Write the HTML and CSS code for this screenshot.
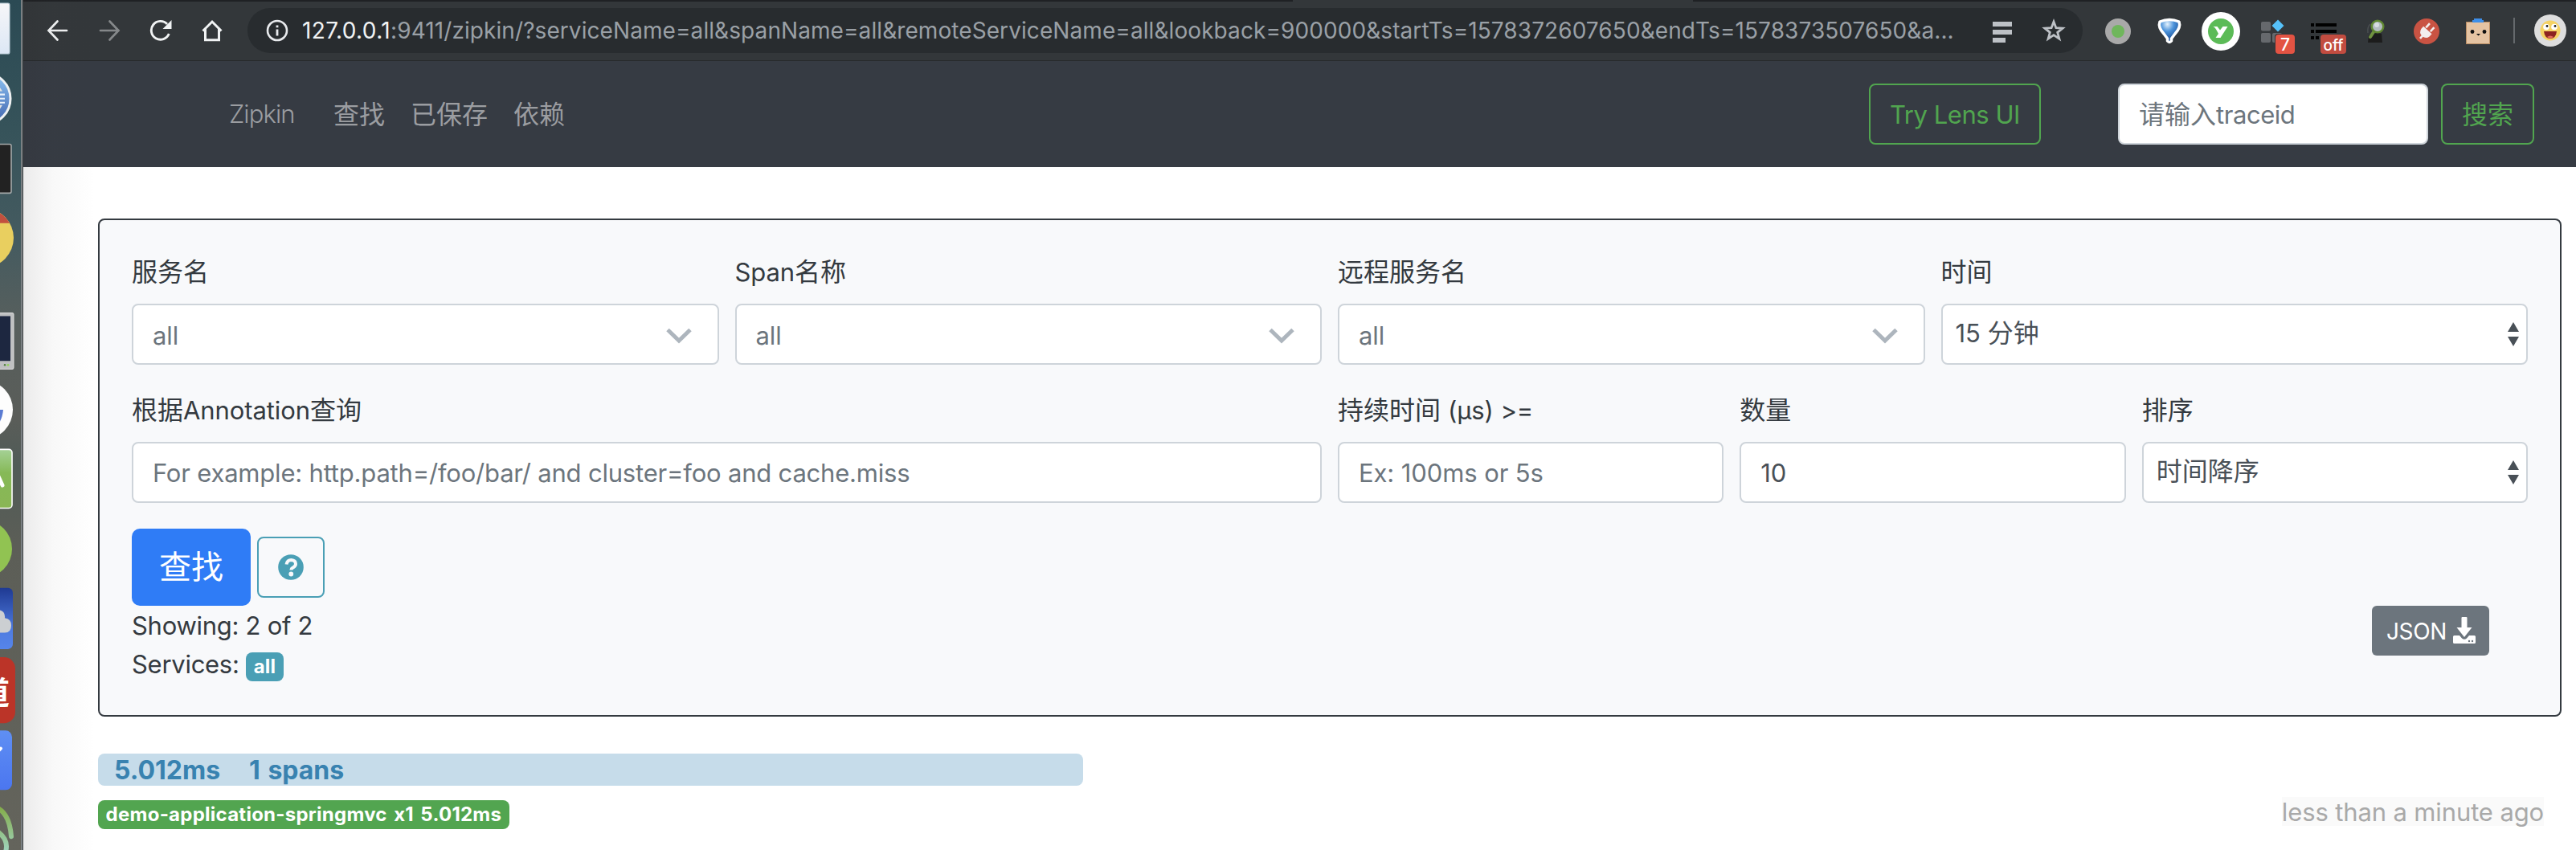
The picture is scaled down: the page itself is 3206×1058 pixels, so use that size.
FILE: index.html
```html
<!DOCTYPE html>
<html lang="zh-CN">
<head>
<meta charset="utf-8">
<title>Zipkin</title>
<link rel="stylesheet" href="styles.css">
</head>
<body>
<div class="desktop">
  <aside class="dock">
    <svg width="29" height="1058" viewBox="0 0 29 1058">
      <defs>
        <linearGradient id="sheet" x1="0" y1="0" x2="0" y2="1"><stop offset="0" stop-color="#f6f6f8"/><stop offset="1" stop-color="#dce7f5"/></linearGradient>
        <linearGradient id="sky" x1="0" y1="0" x2="0" y2="1"><stop offset="0" stop-color="#8fc5f4"/><stop offset="1" stop-color="#3f63ad"/></linearGradient>
        <linearGradient id="leaf" x1="0" y1="0" x2="0" y2="1"><stop offset="0" stop-color="#a5d196"/><stop offset=".4" stop-color="#86b957"/><stop offset="1" stop-color="#8ab655"/></linearGradient>
        <linearGradient id="cloud" x1="0" y1="0" x2="0" y2="1"><stop offset="0" stop-color="#1f3a93"/><stop offset=".7" stop-color="#4f7ce0"/><stop offset="1" stop-color="#5685ea"/></linearGradient>
        <linearGradient id="note" x1="0" y1="0" x2="0" y2="1"><stop offset="0" stop-color="#5f8ff3"/><stop offset="1" stop-color="#4b76f0"/></linearGradient>
        <linearGradient id="ring" x1="0" y1="0" x2="0" y2="1"><stop offset="0" stop-color="#84ad4c"/><stop offset="1" stop-color="#a5dcd6"/></linearGradient>
      </defs>
      <g transform="scale(1 1.0141)">
        <rect x="-20" y="4" width="32" height="62" rx="2" fill="url(#sheet)" stroke="#b9cbd6"/>
        <circle cx="-18" cy="121" r="31" fill="url(#sky)" stroke="#eef1f2" stroke-width="3"/>
        <path d="M-2 116H6M-2 121H6M-2 126H6" stroke="#eaf2fa" stroke-width="2"/>
        <path d="M-1 106L3 112H-2ZM-2 129H3L-1 135Z" fill="#e4e4e0"/>
        <rect x="-20" y="177" width="34" height="60" rx="2" fill="#222" stroke="#a5a9a9" stroke-width="1.6"/>
        <circle cx="-19" cy="292" r="36" fill="#e9cf5f"/>
        <path d="M-19 256A36 36 0 0 1 12 274H-19Z" fill="#c2503f"/>
        <rect x="-20" y="384" width="37" height="69" rx="2" fill="#bfc0c1" stroke="#dcdcdc"/>
        <rect x="-20" y="388" width="33" height="55" fill="#1d2740"/>
        <circle cx="6" cy="448" r="1.200" fill="#4b7c37"/><circle cx="10" cy="448" r="1.400" fill="#94d45c"/>
        <circle cx="-20" cy="503" r="36" fill="#fdfdfd"/>
        <path d="M-2 503H4Q3 514 -2 520Z" fill="#5a7bd2"/>
      </g>
      <g transform="translate(0 -7.45) scale(1 1.0141)">
        <rect x="-20" y="559" width="35" height="72" rx="4" fill="url(#leaf)" stroke="#fff" stroke-width="1.6"/>
        <path d="M-4 588L3 603" stroke="#fff" stroke-width="5" stroke-linecap="round"/>
        <circle cx="-20" cy="681" r="35" fill="#91c352"/>
        <rect x="-20" y="729" width="36" height="75" rx="6" fill="url(#cloud)"/>
        <path d="M-2 756Q7 757 6 766Q14 767 14 775Q14 784 6 784H-2Z" fill="#cccfd2"/>
        <rect x="-60" y="814" width="79" height="81" rx="14" fill="#bb3428"/>
        <text x="-26" y="871" class="dock-glyph">道</text>
        <rect x="-20" y="904" width="35" height="73" rx="8" fill="url(#note)"/>
        <path d="M-2 929L1 926" stroke="#fff" stroke-width="4" stroke-linecap="round"/>
        <path d="M-3 999Q12 1007 14 1034M-3 1028Q8 1036 8 1046T0 1064" fill="none" stroke="url(#ring)" stroke-width="6" stroke-linecap="round"/>
      </g>
    </svg>
  </aside>

  <div class="window">
    <div class="tab-edge"><span class="tab-rest tab-rest-left"></span><span class="tab-rest tab-rest-right"></span></div>
    <div class="toolbar">
      <svg class="nav-icon" width="28" height="28" viewBox="0 0 28 28"><path d="M25 14H3M13.500 2.500L2.500 14L13.500 25.500" fill="none" stroke="#f1f3f4" stroke-width="2.700" stroke-linecap="round"/></svg>
      <svg class="nav-icon" width="28" height="28" viewBox="0 0 28 28"><path d="M3 14H25M14.500 2.500L25.500 14L14.500 25.500" fill="none" stroke="#85888a" stroke-width="2.700" stroke-linecap="round"/></svg>
      <svg class="nav-icon" width="28" height="28" viewBox="0 0 28 28"><path d="M24.300 18A11.400 11.400 0 1 1 22 6" fill="none" stroke="#f1f3f4" stroke-width="2.900"/><path d="M27.500 1V12H16.500Z" fill="#f1f3f4"/></svg>
      <svg class="nav-icon" width="28" height="28" viewBox="0 0 28 28"><path d="M2.500 14.500L14 3L25.500 14.500M5.500 12V25.700H22.500V12" fill="none" stroke="#f1f3f4" stroke-width="3"/></svg>
      <div class="address">
        <svg width="28" height="28" viewBox="0 0 28 28"><circle cx="14" cy="14" r="12" fill="none" stroke="#e8eaed" stroke-width="2.600"/><path d="M14 12.500V20.500M14 7.500V10.200" stroke="#e8eaed" stroke-width="2.800"/></svg>
        <div class="url"><span class="host">127.0.0.1</span>:9411/zipkin/?serviceName=all&amp;spanName=all&amp;remoteServiceName=all&amp;lookback=900000&amp;startTs=1578372607650&amp;endTs=1578373507650&amp;a...</div>
        <svg class="reader" width="24" height="28" viewBox="0 0 24 28"><path d="M0 2H24V8H0ZM0 12H24V18H0ZM0 22H16V28H0Z" fill="#bdc1c6"/></svg>
        <svg class="star" width="30" height="30" viewBox="0 0 30 30"><path d="M15 4L17.900 11.700L26.100 12.100L19.700 17.300L21.900 25.200L15 20.700L8.100 25.200L10.300 17.300L3.900 12.100L12.100 11.700Z" fill="none" stroke="#bdc1c6" stroke-width="2.800"/></svg>
      </div>
      <div class="extensions">
        <svg width="64" height="76" viewBox="0 0 64 76"><circle cx="32" cy="38" r="16" fill="#a9a9a9"/><circle cx="32" cy="38" r="8" fill="#6fb65c"/></svg>
        <svg width="64" height="76" viewBox="0 0 64 76"><defs><radialGradient id="bal" cx=".4" cy=".2" r=".8"><stop offset="0" stop-color="#e4f2fd"/><stop offset=".4" stop-color="#4c93da"/><stop offset="1" stop-color="#0c3c86"/></radialGradient></defs><path d="M20 26Q32 21 44 26Q46.500 33 39 41L34.500 47V50Q32 53 29.500 50V47L25 41Q17.500 33 20 26Z" fill="url(#bal)" stroke="#fff" stroke-width="3.500" stroke-linejoin="round"/></svg>
        <svg width="64" height="76" viewBox="0 0 64 76"><circle cx="32" cy="38" r="24" fill="#fff"/><circle cx="32" cy="38" r="16" fill="#5cbb57"/><path d="M22.500 32H27.500L31 36.500L34.500 32H40.500L31.500 46H25.500L29 41Q28 39 26 35.500Q25 33 22.500 32Z" fill="#fff"/></svg>
        <svg width="64" height="76" viewBox="0 0 64 76"><rect x="18" y="26" width="12" height="11.500" rx="2" fill="#66696d"/><rect x="18" y="40" width="12" height="12" rx="2" fill="#66696d"/><rect x="32" y="40" width="12" height="12" rx="2" fill="#66696d"/><path d="M39 23.500L46.500 31L39 38.500L31.500 31Z" fill="#56c1f9"/><rect x="35" y="41" width="26" height="26" rx="4" fill="#33373a"/><rect x="36" y="42" width="24" height="24" rx="4" fill="#e35343"/><text x="48" y="61.500" class="badge-text">7</text></svg>
        <svg width="64" height="76" viewBox="0 0 64 76"><path d="M16 28H20V32H16ZM22 28H48V32H22ZM16 36H20V40H16ZM22 36H48V40H22ZM16 44H20V48H16ZM22 44H26V48H22Z" fill="#000"/><rect x="28" y="42" width="32" height="24" rx="4" fill="#c24c40"/><text x="44" y="61.500" class="badge-text badge-wide">off</text></svg>
        <svg width="64" height="76" viewBox="0 0 64 76"><path d="M24 43Q32 38 40 41L41 52H23Z" fill="#1c1c1c"/><path d="M26 29Q22 32 23 40" fill="none" stroke="#4a4e51" stroke-width="1.500"/><path d="M30 39L26 45" stroke="#6f9140" stroke-width="4" stroke-linecap="round"/><circle cx="35" cy="32" r="7.300" fill="#b4bcc0" stroke="#5f8730" stroke-width="2.500"/><circle cx="34" cy="30" r="3" fill="#d8dee0"/></svg>
        <svg width="64" height="76" viewBox="0 0 64 76"><circle cx="32" cy="38" r="16" fill="#c95343"/><g transform="translate(32 38) rotate(42)" fill="#f3eeee"><path d="M-7 -2H7V2Q6 8 0 8Q-6 8 -7 2Z"/><rect x="-5" y="-10" width="2.600" height="7"/><rect x="2.400" y="-10" width="2.600" height="7"/><rect x="-1.300" y="7" width="2.600" height="5"/></g></svg>
        <svg width="64" height="76" viewBox="0 0 64 76"><rect x="17.500" y="26.500" width="29" height="27" fill="#e5c3a2" stroke="#b98c62"/><path d="M27 22H37V24H39V27H25V24H27Z" fill="#3f8fe8"/><circle cx="25" cy="38.500" r="2.400" fill="#111"/><circle cx="40" cy="38.500" r="2.400" fill="#111"/><path d="M30 41H35L32.500 43.500Z" fill="#111"/></svg>
      </div>
      <span class="divider"></span>
      <svg class="avatar" width="40" height="40" viewBox="0 0 40 40"><circle cx="20" cy="20" r="20" fill="#dedede"/><circle cx="20" cy="20" r="12.500" fill="#f5d264"/><circle cx="15" cy="15.500" r="3.800" fill="#fff"/><circle cx="25" cy="15.500" r="3.800" fill="#fff"/><circle cx="16" cy="14.500" r="1.400" fill="#222"/><circle cx="26" cy="14.500" r="1.400" fill="#222"/><path d="M12 21H28Q27 30 20 30Q13 30 12 21Z" fill="#8c2320"/><path d="M16 28Q20 25 24 28Q20 31 16 28Z" fill="#e26a5c"/></svg>
    </div>

    <nav class="navbar">
      <a class="brand">Zipkin</a>
      <a class="nav-link">查找</a>
      <a class="nav-link">已保存</a>
      <a class="nav-link">依赖</a>
      <button class="btn btn-lens">Try Lens UI</button>
      <div class="control trace-input"><span>请输入<span class="latin">traceid</span></span></div>
      <button class="btn btn-search">搜索</button>
    </nav>

    <main class="content">
      <section class="panel">
        <div class="form-row row-services">
          <div class="field"><label>服务名</label><div class="control chosen"><span class="latin">all</span><svg width="32" height="20" viewBox="0 0 32 20"><path d="M2 2.500L16 16L30 2.500" fill="none" stroke="#adb5bd" stroke-width="5"/></svg></div></div>
          <div class="field"><label><span class="latin">Span</span>名称</label><div class="control chosen"><span class="latin">all</span><svg width="32" height="20" viewBox="0 0 32 20"><path d="M2 2.500L16 16L30 2.500" fill="none" stroke="#adb5bd" stroke-width="5"/></svg></div></div>
          <div class="field"><label>远程服务名</label><div class="control chosen"><span class="latin">all</span><svg width="32" height="20" viewBox="0 0 32 20"><path d="M2 2.500L16 16L30 2.500" fill="none" stroke="#adb5bd" stroke-width="5"/></svg></div></div>
          <div class="field"><label>时间</label><div class="control select"><span><span class="latin">15</span> 分钟</span><svg width="14" height="30" viewBox="0 0 14 30"><path d="M7 0L14 12H0ZM0 18H14L7 30Z" fill="#495057"/></svg></div></div>
        </div>
        <div class="form-row row-filters">
          <div class="field"><label>根据<span class="latin">Annotation</span>查询</label><div class="control"><span class="latin example">For example: http.path=/foo/bar/ and cluster=foo and cache.miss</span></div></div>
          <div class="field"><label>持续时间 <span class="latin">(μs) &gt;=</span></label><div class="control"><span class="latin">Ex: 100ms or 5s</span></div></div>
          <div class="field"><label>数量</label><div class="control filled"><span class="latin">10</span></div></div>
          <div class="field"><label>排序</label><div class="control select"><span>时间降序</span><svg width="14" height="30" viewBox="0 0 14 30"><path d="M7 0L14 12H0ZM0 18H14L7 30Z" fill="#495057"/></svg></div></div>
        </div>
        <div class="actions">
          <button class="btn-find">查找</button>
          <button class="btn-help"><svg width="32" height="36" viewBox="0 0 32 36"><ellipse cx="16" cy="18" rx="15.800" ry="15.800" fill="#4a9fb5"/><path d="M10.500 14.500Q11.500 9 16.500 9Q22 9.500 22 14Q22 16.500 19 18.300Q16.500 19.500 16.500 21.500" fill="none" stroke="#f8f9fb" stroke-width="4"/><circle cx="16.300" cy="26.500" r="2.900" fill="#f8f9fb"/></svg></button>
        </div>
        <div class="summary">
          <div class="latin counts">
            <div>Showing: 2 of 2</div>
            <div>Services: <span class="tag tag-info">all</span></div>
          </div>
          <button class="btn-json"><span>JSON</span><svg width="28" height="34" viewBox="0 0 28 34"><path d="M10.500 1Q10.500 0 11.500 0H16.500Q17.500 0 17.500 1V13H23.500L14 25L4.500 13H10.500Z" fill="#fff"/><path d="M1.500 23H8L11 26.500Q14 29 17 26.500L20 23H26.500Q28 23 28 24.500V31.500Q28 33 26.500 33H1.500Q0 33 0 31.500V24.500Q0 23 1.500 23Z" fill="#fff"/><circle cx="20" cy="30" r="1.200" fill="#6c757d"/><circle cx="24" cy="30" r="1.200" fill="#6c757d"/></svg></button>
        </div>
      </section>

      <section class="trace">
        <div class="trace-bar"><span class="duration">5.012ms</span><span>1 spans</span></div>
        <div class="trace-info">
          <span class="tag tag-service">demo-application-springmvc x1 5.012ms</span>
          <span class="time-ago">less than a minute ago</span>
        </div>
      </section>
    </main>
  </div>
</div>
</body>
</html>
```
FILE: styles.css
```css
* { box-sizing: border-box; }
body {
  margin: 0;
  overflow: hidden;
  font: 32px/48px Inter, "Noto Sans CJK SC", sans-serif;
  color: #343a40;
}
svg { display: block; flex: none; }
button { font: inherit; letter-spacing: inherit; padding: 0; }

.desktop { display: flex; width: 3206px; height: 1058px; overflow: hidden; }

.dock {
  width: 29px;
  flex: none;
  background:
    linear-gradient(90deg, transparent 26px, #7b8083 26px, #7b8083 28px, #3a3e40 28px),
    linear-gradient(180deg, #2b4a54 0, #36535a 160px, #455b60 300px, #575f5d 400px, #5a5d59 520px, #505b57 580px, #5c5e57 680px, #64645c 1058px);
}
.dock-glyph { font: 700 38px "Noto Sans CJK SC", sans-serif; fill: #fff; }

.window {
  position: relative;
  flex: 1;
  min-width: 0;
  height: 1058px;
  background: #fff;
}
/* shade the dock throws on the left edge of the window */
.window::after {
  content: "";
  position: absolute;
  left: 0;
  top: 0;
  width: 90px;
  height: 100%;
  background: linear-gradient(90deg, rgba(40, 35, 35, .09), rgba(60, 60, 60, .035) 40%, transparent);
}

.tab-edge { display: flex; justify-content: space-between; height: 2px; background: #33373a; }
.tab-rest { background: #1f2124; }
.tab-rest-left { width: 1580px; }
.tab-rest-right { width: 1099px; }

.toolbar {
  display: flex;
  align-items: center;
  height: 74px;
  padding: 0 12px 2px 29px;
  background: #33373a;
  border-bottom: 1px solid #26292b;
}
.nav-icon { margin-right: 36px; }
.address {
  display: flex;
  align-items: center;
  width: 2284px;
  height: 56px;
  margin-left: -6px;
  padding: 0 20px 0 23px;
  border-radius: 28px;
  background: #282c2f;
}
.url {
  width: 2080px;
  margin-left: 17px;
  font-size: 28px;
  letter-spacing: .08px;
  white-space: nowrap;
  color: #9aa0a6;
}
.host { color: #f1f3f4; letter-spacing: .4px; }
.reader { margin-left: 24px; margin-top: 2px; }
.star { margin-left: 37px; }
.extensions { display: flex; height: 76px; margin-left: 12px; margin-top: 2px; }
.badge-text { font: 500 21px Inter, sans-serif; fill: #fff; text-anchor: middle; }
.badge-wide { font-size: 19px; }
.divider { width: 2px; height: 32px; margin-left: 12px; background: #65696c; }
.avatar { margin-left: 24px; }

.navbar {
  display: flex;
  align-items: center;
  height: 132px;
  padding: 0 52px 0 256px;
  background: #363b43;
  color: #9b9da1;
}
.brand { width: 98px; margin-right: 32px; font-size: 31px; font-weight: 300; letter-spacing: -.9px; }
.nav-link { margin-right: 32px; padding-top: 2px; }
.btn {
  height: 76px;
  border: 2px solid #51a54f;
  border-radius: 8px;
  background: transparent;
  color: #51a54f;
}
.btn-lens { width: 214px; margin: 0 96px 0 auto; padding-top: 1px; font-size: 31px; letter-spacing: -.45px; }
.btn-search { width: 116px; margin-left: 16px; padding-top: 2px; }

.control {
  display: flex;
  align-items: center;
  justify-content: space-between;
  height: 76px;
  padding: 0 24px;
  border: 2px solid #ced4da;
  border-radius: 8px;
  background: #fff;
  color: #6c757d;
  white-space: nowrap;
}
.control > span { padding-top: 2px; }
.trace-input { width: 386px; }
.trace-input .latin { letter-spacing: -.45px; }
.latin { font-size: 31px; letter-spacing: -.1px; }
.example { letter-spacing: -.2px; }
.chosen { padding-right: 32px; }
.chosen > span { padding-top: 3px; }
.chosen > svg { margin-top: 3px; }
.filled, .select { color: #495057; }
.select { padding: 0 9px 0 16px; }
.select > span { padding: 0 0 3px; }

.content { padding: 64px 18px 0 93px; }
.panel {
  height: 620px;
  padding: 40px;
  border: 2px solid #343a40;
  border-radius: 8px;
  background: #f8f9fb;
}
.form-row { display: grid; gap: 20px; margin-bottom: 32px; }
.row-services { grid-template-columns: repeat(4, 1fr); }
.row-filters { grid-template-columns: 1481px repeat(3, 1fr); }
.field { min-width: 0; }
.field label {
  display: block;
  height: 48px;
  margin-bottom: 16px;
  padding-top: 1px;
  white-space: nowrap;
}

.actions { display: flex; align-items: center; gap: 8px; height: 96px; }
.btn-find {
  width: 148px;
  height: 96px;
  border: 0;
  border-radius: 10px;
  background: #2f7cf6;
  color: #fff;
  font-size: 40px;
}
.btn-help {
  display: flex;
  align-items: center;
  justify-content: center;
  width: 84px;
  height: 76px;
  border: 2px solid #4a9fb5;
  border-radius: 8px;
  background: transparent;
}
.summary {
  display: flex;
  align-items: flex-start;
  justify-content: space-between;
  padding-right: 48px;
}
.counts { padding-top: 1px; letter-spacing: -.28px; }
.tag {
  display: inline-block;
  height: 36px;
  padding: 0 9.6px;
  border-radius: 8px;
  color: #fff;
  font-size: 24px;
  font-weight: 700;
  line-height: 36px;
  letter-spacing: .25px;
  word-spacing: 2.5px;
}
.tag-info { background: #4a9fb5; }
.tag-service { background: #52a550; }
.btn-json {
  display: flex;
  align-items: center;
  gap: 8px;
  width: 146px;
  height: 62px;
  padding: 0 0 0 18px;
  border: 0;
  border-radius: 6px;
  background: #6c757d;
  color: #fff;
  font-size: 28px;
  letter-spacing: -.4px;
}
.btn-json > span { padding-top: 2px; }

.trace { padding-top: 46px; }
.trace-bar {
  display: flex;
  align-items: center;
  width: 1226px;
  height: 40px;
  padding: 1px 0 0 20px;
  border-radius: 8px;
  background: #c6dcea;
  color: #3882b0;
  font-weight: 700;
  word-spacing: 2px;
}
.duration { width: 168px; }
.trace-info { display: flex; justify-content: space-between; padding-right: 22px; }
.tag-service { margin-top: 18px; }
.time-ago {
  height: 36px;
  margin-top: 14px;
  background: #fafafa;
  color: #a9a9a9;
  font-size: 31px;
  line-height: 37px;
  letter-spacing: -.13px;
}
```
